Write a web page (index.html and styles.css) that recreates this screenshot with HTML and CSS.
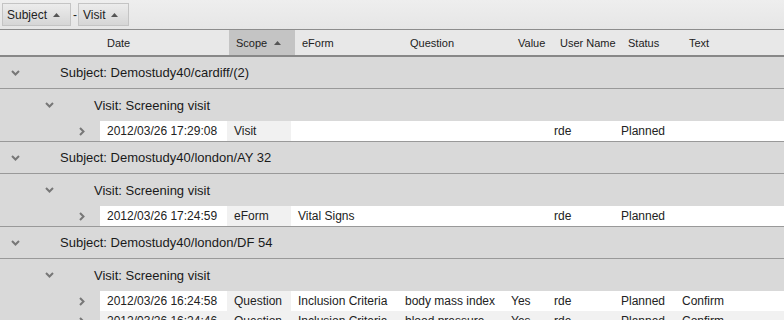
FILE: index.html
```html
<!DOCTYPE html>
<html lang="en">
<head>
    <meta charset="UTF-8">
    <title>Audit Trail</title>
    <link rel="stylesheet" href="styles.css">
</head>
<body>
    <div class="toolbar">
        <div class="pill">Subject <svg class="sort" width="7" height="4" viewBox="0 0 7 4"><path d="M0 4 L3.5 0 L7 4 Z"/></svg></div>
        <span class="dash">-</span>
        <div class="pill">Visit <svg class="sort" width="7" height="4" viewBox="0 0 7 4"><path d="M0 4 L3.5 0 L7 4 Z"/></svg></div>
    </div>

    <div class="head">
        <div class="pad"></div>
        <div class="hc c-date">Date</div>
        <div class="hc c-scope sorted">Scope <svg class="sort" width="7" height="4" viewBox="0 0 7 4"><path d="M0 4 L3.5 0 L7 4 Z"/></svg></div>
        <div class="hc c-eform">eForm</div>
        <div class="hc c-question">Question</div>
        <div class="hc c-value">Value</div>
        <div class="hc c-user">User Name</div>
        <div class="hc c-status">Status</div>
        <div class="hc c-text">Text</div>
    </div>

    <div class="group subject">
        <span class="toggle"><svg width="9" height="6" viewBox="0 0 9 6"><path d="M1 1 L4.5 4.5 L8 1" /></svg></span>
        Subject: Demostudy40/cardiff/(2)
    </div>
    <div class="group visit">
        <span class="toggle"><svg width="9" height="6" viewBox="0 0 9 6"><path d="M1 1 L4.5 4.5 L8 1" /></svg></span>
        Visit: Screening visit
    </div>
    <div class="row last">
        <div class="lead"><svg width="6" height="9" viewBox="0 0 6 9"><path d="M1 1 L4.5 4.5 L1 8" /></svg></div>
        <div class="bc c-date">2012/03/26 17:29:08</div>
        <div class="bc c-scope">Visit</div>
        <div class="bc c-eform"></div>
        <div class="bc c-question"></div>
        <div class="bc c-value"></div>
        <div class="bc c-user">rde</div>
        <div class="bc c-status">Planned</div>
        <div class="bc c-text"></div>
    </div>

    <div class="group subject">
        <span class="toggle"><svg width="9" height="6" viewBox="0 0 9 6"><path d="M1 1 L4.5 4.5 L8 1" /></svg></span>
        Subject: Demostudy40/london/AY 32
    </div>
    <div class="group visit">
        <span class="toggle"><svg width="9" height="6" viewBox="0 0 9 6"><path d="M1 1 L4.5 4.5 L8 1" /></svg></span>
        Visit: Screening visit
    </div>
    <div class="row last">
        <div class="lead"><svg width="6" height="9" viewBox="0 0 6 9"><path d="M1 1 L4.5 4.5 L1 8" /></svg></div>
        <div class="bc c-date">2012/03/26 17:24:59</div>
        <div class="bc c-scope">eForm</div>
        <div class="bc c-eform">Vital Signs</div>
        <div class="bc c-question"></div>
        <div class="bc c-value"></div>
        <div class="bc c-user">rde</div>
        <div class="bc c-status">Planned</div>
        <div class="bc c-text"></div>
    </div>

    <div class="group subject">
        <span class="toggle"><svg width="9" height="6" viewBox="0 0 9 6"><path d="M1 1 L4.5 4.5 L8 1" /></svg></span>
        Subject: Demostudy40/london/DF 54
    </div>
    <div class="group visit">
        <span class="toggle"><svg width="9" height="6" viewBox="0 0 9 6"><path d="M1 1 L4.5 4.5 L8 1" /></svg></span>
        Visit: Screening visit
    </div>
    <div class="row">
        <div class="lead"><svg width="6" height="9" viewBox="0 0 6 9"><path d="M1 1 L4.5 4.5 L1 8" /></svg></div>
        <div class="bc c-date">2012/03/26 16:24:58</div>
        <div class="bc c-scope">Question</div>
        <div class="bc c-eform">Inclusion Criteria</div>
        <div class="bc c-question">body mass index</div>
        <div class="bc c-value">Yes</div>
        <div class="bc c-user">rde</div>
        <div class="bc c-status">Planned</div>
        <div class="bc c-text">Confirm</div>
    </div>
    <div class="row alt">
        <div class="lead"><svg width="6" height="9" viewBox="0 0 6 9"><path d="M1 1 L4.5 4.5 L1 8" /></svg></div>
        <div class="bc c-date">2012/03/26 16:24:46</div>
        <div class="bc c-scope">Question</div>
        <div class="bc c-eform">Inclusion Criteria</div>
        <div class="bc c-question">blood pressure</div>
        <div class="bc c-value">Yes</div>
        <div class="bc c-user">rde</div>
        <div class="bc c-status">Planned</div>
        <div class="bc c-text">Confirm</div>
    </div>
</body>
</html>
```

FILE: styles.css
```css
body {
    margin: 0;
    padding: 0;
    background: #d9d9d9;
    font-family: "Liberation Sans", Arial, sans-serif;
    color: #222;
    overflow: hidden;
}

/* grouping toolbar */
.toolbar {
    display: flex;
    align-items: center;
    height: 29px;
    padding-left: 2px;
    background: linear-gradient(#eeeeee, #e6e6e6);
    border-bottom: 1px solid #8c8c8c;
    font-size: 12px;
}

.pill {
    display: flex;
    align-items: center;
    gap: 6px;
    box-sizing: border-box;
    height: 23px;
    padding: 0 10px 0 4px;
    border: 1px solid #c4c4c4;
    background: linear-gradient(#ececec, #d6d6d6);
    color: #222;
}

.dash {
    margin: 0 1px 0 2px;
}

.sort {
    fill: #555;
}

/* column header */
.head {
    display: flex;
    height: 25px;
    background: #e8e8e8;
    border-bottom: 2px solid #888;
    font-size: 11px;
    color: #222;
}

.head .pad {
    width: 100px;
}

.hc {
    display: flex;
    align-items: center;
    gap: 7px;
    box-sizing: border-box;
    padding-left: 7px;
}

.hc.sorted {
    background: #c4c4c4;
}

.hc.c-date { width: 129px; }
.hc.c-scope { width: 66px; }
.hc.c-eform { width: 108px; }
.hc.c-question { width: 108px; }
.hc.c-value { width: 42px; }
.hc.c-user { width: 68px; }
.hc.c-status { width: 61px; }
.hc.c-text { flex: 1; }

/* group rows */
.group {
    display: flex;
    align-items: center;
    font-size: 13px;
    color: #1a1a1a;
}

.subject {
    height: 31px;
    border-bottom: 1px solid #999;
}

.visit {
    height: 32px;
    padding-left: 34px;
}

.toggle {
    display: flex;
    align-items: center;
    box-sizing: border-box;
    width: 60px;
    padding-left: 11px;
}

.toggle path,
.lead path {
    fill: none;
    stroke: #777;
    stroke-width: 2;
}

/* data rows */
.row {
    display: flex;
    height: 20px;
    font-size: 12px;
    line-height: 20px;
    background: #fff;
}

.row.alt {
    background: #f1f1f1;
}

.row.last {
    border-bottom: 1px solid #999;
}

.lead {
    display: flex;
    align-items: center;
    justify-content: flex-end;
    box-sizing: border-box;
    width: 100px;
    padding-right: 15px;
    background: #d9d9d9;
}

.bc {
    box-sizing: border-box;
    padding-left: 7px;
    white-space: nowrap;
    overflow: hidden;
}

.bc.c-date { width: 127px; }
.bc.c-scope { width: 64px; background: #f1f1f1; }
.bc.c-eform { width: 107px; }
.bc.c-question { width: 106px; }
.bc.c-value { width: 43px; }
.bc.c-user { width: 67px; }
.bc.c-status { width: 61px; }
.bc.c-text { flex: 1; }
```
